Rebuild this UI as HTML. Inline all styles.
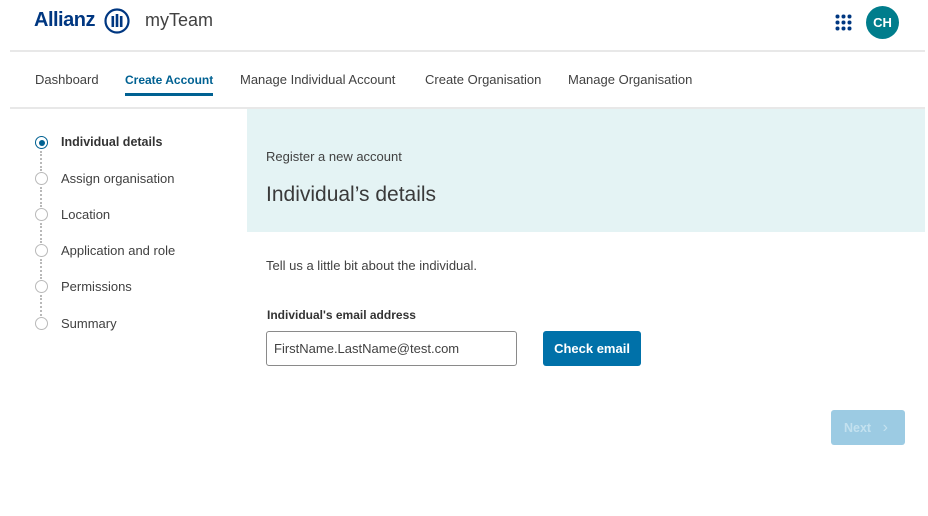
<!DOCTYPE html>
<html><head><style>
*{margin:0;padding:0;box-sizing:border-box}
body{width:928px;height:516px;background:#fff;font-family:"Liberation Sans",sans-serif;color:#414141;position:relative;overflow:hidden}
.a{position:absolute;white-space:nowrap}
.nav{font-size:13px;top:72px;color:#414141}
.step{font-size:13px;left:61px;color:#414141}
.c{position:absolute;left:35px;width:13px;height:13px;border:1.5px solid #b9b9b9;border-radius:50%}
.d{position:absolute;left:40px;width:2px;border-left:2px dotted #b9b9b9}
</style></head><body>
<div class="a" style="left:34px;top:9px;font-size:20px;font-weight:bold;color:#003781;letter-spacing:-0.5px">Allianz</div>
<svg class="a" style="left:104px;top:8px" width="26" height="26" viewBox="0 0 26 26"><circle cx="13" cy="13" r="11.5" fill="none" stroke="#003781" stroke-width="2.2"/><rect x="7.5" y="8" width="2.6" height="11" fill="#003781"/><rect x="11.7" y="6" width="2.6" height="13" fill="#003781"/><rect x="15.9" y="8" width="2.6" height="11" fill="#003781"/></svg>
<div class="a" style="left:145px;top:10px;font-size:18px;color:#414141">myTeam</div>
<svg class="a" style="left:835px;top:14px" width="17" height="17"><g fill="#003781"><circle cx="2.5" cy="2.5" r="2"/><circle cx="8.5" cy="2.5" r="2"/><circle cx="14.5" cy="2.5" r="2"/><circle cx="2.5" cy="8.5" r="2"/><circle cx="8.5" cy="8.5" r="2"/><circle cx="14.5" cy="8.5" r="2"/><circle cx="2.5" cy="14.5" r="2"/><circle cx="8.5" cy="14.5" r="2"/><circle cx="14.5" cy="14.5" r="2"/></g></svg>
<div class="a" style="left:866px;top:6px;width:33px;height:33px;border-radius:50%;background:#007d8c;color:#fff;font-weight:bold;font-size:13px;line-height:33px;text-align:center">CH</div>
<div class="a" style="left:10px;top:50px;width:915px;height:2px;background:#e8e8e8"></div>
<div class="a nav" style="left:35px">Dashboard</div>
<div class="a nav" style="left:125px;top:73px;font-weight:bold;color:#006192;font-size:12px">Create Account</div>
<div class="a" style="left:125px;top:93px;width:88px;height:3px;background:#006192"></div>
<div class="a nav" style="left:240px">Manage Individual Account</div>
<div class="a nav" style="left:425px">Create Organisation</div>
<div class="a nav" style="left:568px">Manage Organisation</div>
<div class="a" style="left:10px;top:107px;width:915px;height:2px;background:#e8e8e8"></div>
<div class="a" style="left:247px;top:109px;width:678px;height:123px;background:#e4f3f4"></div>
<div class="a" style="left:266px;top:149px;font-size:13px">Register a new account</div>
<div class="a" style="left:266px;top:183px;font-size:21px;color:#3a3a3a">Individual’s details</div>
<div class="c" style="top:136px;border-color:#006192"></div><div class="a" style="left:38.5px;top:139.5px;width:6px;height:6px;border-radius:50%;background:#006192"></div>
<div class="d" style="top:151px;height:20px"></div>
<div class="c" style="top:172px"></div><div class="d" style="top:187px;height:20px"></div>
<div class="c" style="top:208px"></div><div class="d" style="top:223px;height:20px"></div>
<div class="c" style="top:244px"></div><div class="d" style="top:259px;height:20px"></div>
<div class="c" style="top:280px"></div><div class="d" style="top:295px;height:21px"></div>
<div class="c" style="top:317px"></div>
<div class="a step" style="top:135px;font-weight:bold;color:#333;font-size:12.5px">Individual details</div>
<div class="a step" style="top:171px">Assign organisation</div>
<div class="a step" style="top:207px">Location</div>
<div class="a step" style="top:243px">Application and role</div>
<div class="a step" style="top:279px">Permissions</div>
<div class="a step" style="top:316px">Summary</div>
<div class="a" style="left:266px;top:258px;font-size:13px">Tell us a little bit about the individual.</div>
<div class="a" style="left:267px;top:308px;font-size:12px;font-weight:bold;color:#333">Individual's email address</div>
<div class="a" style="left:266px;top:331px;width:251px;height:35px;border:1px solid #8a8a8a;border-radius:3px;font-size:13px;line-height:33px;padding-left:7px;color:#414141">FirstName.LastName@test.com</div>
<div class="a" style="left:543px;top:331px;width:98px;height:35px;background:#0071a9;border-radius:3px;color:#fff;font-weight:bold;font-size:13px;line-height:35px;text-align:center">Check email</div>
<div class="a" style="left:831px;top:410px;width:74px;height:35px;background:#9ccbe3;border-radius:3px;color:#c3e1ef;font-weight:bold;font-size:12.5px;line-height:35px;padding-left:13px">Next <span style="margin-left:8px;font-size:16px;font-weight:normal">&#8250;</span></div>
</body></html>
